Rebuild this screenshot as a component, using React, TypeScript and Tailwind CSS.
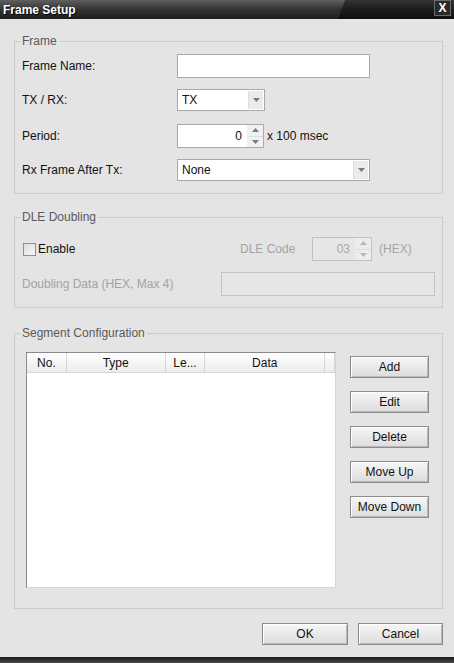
import React from 'react'

const font = { fontFamily: '"Liberation Sans", Arial, sans-serif' }

// small gray triangle used by combo and spin buttons
function Tri({ up = false, dim = false }: { up?: boolean; dim?: boolean }) {
  return (
    <svg width="7" height="4" viewBox="0 0 7 4">
      <path d={up ? 'M0 4 L3.5 0 L7 4 Z' : 'M0 0 L7 0 L3.5 4 Z'} fill={dim ? '#b8b8b8' : '#7a7a7a'} />
    </svg>
  )
}

function Group({ title, children, className = '' }: { title: string; children: React.ReactNode; className?: string }) {
  return (
    <div className={`border border-[#cbcbcb] ${className}`}>
      <div className="-mt-[8px] ml-[5px] px-[2px] w-fit bg-[#e4e4e4] text-[12px] leading-[14px] text-[#5a5a5a]">{title}</div>
      {children}
    </div>
  )
}

function Combo({ value, width }: { value: string; width: string }) {
  return (
    <div className={`flex h-[22px] ${width} border border-[#a9a9a9] bg-white`}>
      <div className="flex-1 pl-[4px] text-[12px] leading-[21px] text-[#111]">{value}</div>
      <div className="m-[1px] flex w-[15px] items-center justify-center bg-[#ebebeb] border-l border-[#dcdcdc]">
        <Tri />
      </div>
    </div>
  )
}

function Spin({ value, width, disabled = false }: { value: string; width: string; disabled?: boolean }) {
  return (
    <div className={`flex h-[24px] ${width} border ${disabled ? 'border-[#c2c2c2] bg-[#e6e6e6]' : 'border-[#a9a9a9] bg-white'}`}>
      <div className={`flex-1 pr-[5px] text-right text-[12px] leading-[22px] ${disabled ? 'text-[#a8a8a8]' : 'text-[#111]'}`}>{value}</div>
      <div className="flex w-[16px] flex-col">
        <div className={`flex flex-1 items-center justify-center border-b border-[#dedede] ${disabled ? 'bg-[#ececec]' : 'bg-[#f0f0f0]'}`}>
          <Tri up dim={disabled} />
        </div>
        <div className={`flex flex-1 items-center justify-center ${disabled ? 'bg-[#ececec]' : 'bg-[#f0f0f0]'}`}>
          <Tri dim={disabled} />
        </div>
      </div>
    </div>
  )
}

function Btn({ label, className = '' }: { label: string; className?: string }) {
  return (
    <div
      className={`flex h-[22px] items-center justify-center border border-[#8c8c8c] bg-gradient-to-b from-[#f7f7f7] to-[#dcdcdc] shadow-[inset_1px_1px_0_#ffffff,inset_-1px_-1px_0_#b9b9b9] text-[12px] text-[#111] ${className}`}
    >
      {label}
    </div>
  )
}

function Row({ label, children, className = '' }: { label: string; children: React.ReactNode; className?: string }) {
  return (
    <div className={`flex items-center pl-[7px] ${className}`}>
      <div className="w-[155px] text-[12px] text-[#111]">{label}</div>
      {children}
    </div>
  )
}

export default function App() {
  const cols = [
    { name: 'No.', w: 'w-[40px]' },
    { name: 'Type', w: 'w-[99px]' },
    { name: 'Le...', w: 'w-[40px]' },
    { name: 'Data', w: 'w-[120px]' },
  ]

  return (
    <div className="flex h-[663px] w-[454px] flex-col bg-[#e4e4e4]" style={font}>
      {/* title bar */}
      <div className="relative flex h-[19px] items-center bg-gradient-to-b from-[#606060] via-[#333333] to-[#1d1d1d]">
        <div className="absolute bottom-0 left-[338px] right-0 top-0 bg-black/45 [clip-path:polygon(7px_0,100%_0,100%_100%,0_100%)]" />
        <span className="relative pl-[3px] text-[12px] font-bold text-white [text-shadow:1px_1px_0_#000]">Frame Setup</span>
        <div className="relative ml-auto mr-[3px] flex h-[16px] w-[17px] -mt-[3px] items-center justify-center border border-[#6a6a6a] bg-[#2a2a2a] text-[12px] font-bold leading-none text-white">
          X
        </div>
      </div>

      <div className="flex flex-1 flex-col pl-[14px] pr-[11px]">
        {/* Frame */}
        <Group title="Frame" className="mt-[22px] pb-[12px]">
          <Row label="Frame Name:" className="mt-[6px]">
            <div className="h-[24px] w-[193px] border border-[#a9a9a9] bg-white" />
          </Row>
          <Row label="TX / RX:" className="mt-[11px]">
            <Combo value="TX" width="w-[88px]" />
          </Row>
          <Row label="Period:" className="mt-[13px]">
            <Spin value="0" width="w-[87px]" />
            <span className="ml-[3px] text-[12px] text-[#111]">x 100 msec</span>
          </Row>
          <Row label="Rx Frame After Tx:" className="mt-[11px]">
            <Combo value="None" width="w-[193px]" />
          </Row>
        </Group>

        {/* DLE Doubling */}
        <Group title="DLE Doubling" className="mt-[23px] pb-[11px]">
          <div className="mt-[13px] flex h-[24px] items-center pl-[8px]">
            <div className="flex w-[217px] items-center">
              <div className="h-[13px] w-[13px] border border-[#8e8e8e] bg-gradient-to-br from-[#dcdcdc] to-[#f8f8f8]" />
              <span className="ml-[2px] text-[12px] text-[#111]">Enable</span>
            </div>
            <span className="w-[72px] text-[12px] text-[#a3a3a3]">DLE Code</span>
            <Spin value="03" width="w-[60px]" disabled />
            <span className="ml-[7px] text-[12px] text-[#a3a3a3]">(HEX)</span>
          </div>
          <div className="mt-[11px] flex h-[24px] items-center pl-[7px]">
            <span className="w-[199px] text-[12px] text-[#a3a3a3]">Doubling Data (HEX, Max 4)</span>
            <div className="h-[24px] w-[214px] border border-[#c2c2c2] bg-[#e6e6e6]" />
          </div>
        </Group>

        {/* Segment Configuration */}
        <Group title="Segment Configuration" className="mt-[25px] pb-[20px]">
          <div className="mt-[12px] flex">
            <div className="ml-[11px] flex h-[236px] w-[310px] flex-col border border-t-[#8a8a8a] border-l-[#8a8a8a] border-r-[#d6d6d6] border-b-[#d6d6d6] bg-white">
              <div className="flex h-[20px] border-b border-[#d5d5d5] bg-gradient-to-b from-white to-[#ececec]">
                {cols.map(c => (
                  <div key={c.name} className={`${c.w} border-r border-[#d5d5d5] text-center text-[12px] leading-[20px] text-[#111]`}>
                    {c.name}
                  </div>
                ))}
                <div className="w-[10px] border-r border-[#d5d5d5]" />
              </div>
            </div>
            <div className="ml-[14px] mt-[4px] flex w-[79px] flex-col gap-[13px]">
              <Btn label="Add" />
              <Btn label="Edit" />
              <Btn label="Delete" />
              <Btn label="Move Up" />
              <Btn label="Move Down" />
            </div>
          </div>
        </Group>

        <div className="mt-[14px] flex justify-end gap-[10px]">
          <Btn label="OK" className="w-[86px]" />
          <Btn label="Cancel" className="w-[85px]" />
        </div>
      </div>

      <div className="h-[6px] bg-gradient-to-b from-[#1a1a1a] to-[#4a4a4a]" />
    </div>
  )
}
